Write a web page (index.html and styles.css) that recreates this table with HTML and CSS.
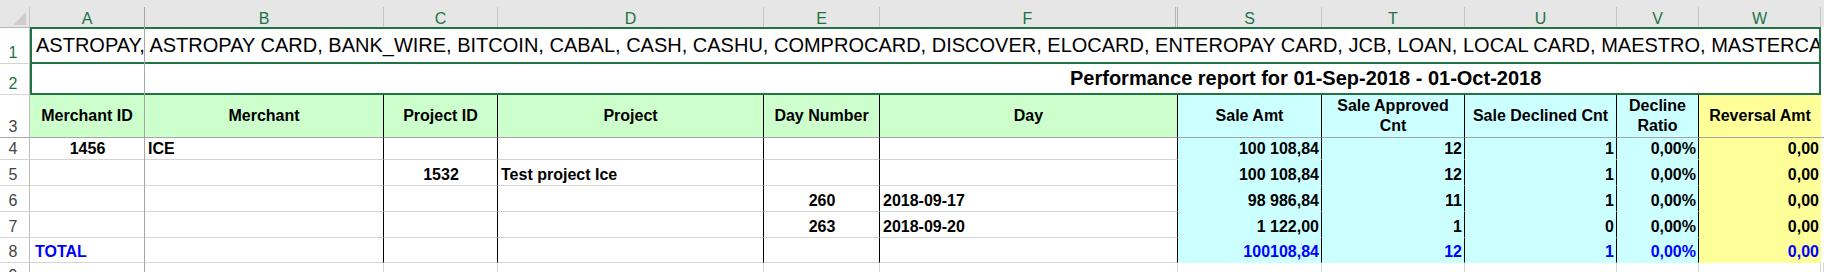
FILE: index.html
```html
<!DOCTYPE html>
<html lang="en">
<head>
<meta charset="utf-8">
<title>Performance report</title>
<link rel="stylesheet" href="styles.css">
</head>
<body>
<div class="sheet">
  <div class="topband"></div>
  <div class="row colhdr">
    <div class="corner"><svg width="30" height="20" viewBox="0 0 30 20"><polygon points="13,18 26,18 26,5" fill="#cdcdcd"/></svg></div>
    <div class="ch">A</div>
    <div class="ch">B</div>
    <div class="ch">C</div>
    <div class="ch">D</div>
    <div class="ch">E</div>
    <div class="ch hid">F</div>
    <div class="ch">S</div>
    <div class="ch">T</div>
    <div class="ch">U</div>
    <div class="ch">V</div>
    <div class="ch">W</div>
    <div class="ch last"></div>
  </div>

  <div class="row r1">
    <div class="rn first sel">1</div>
    <div class="banner">ASTROPAY, ASTROPAY CARD, BANK_WIRE, BITCOIN, CABAL, CASH, CASHU, COMPROCARD, DISCOVER, ELOCARD, ENTEROPAY CARD, JCB, LOAN, LOCAL CARD, MAESTRO, MASTERCARD</div>
    <div class="pad"></div>
  </div>

  <div class="row r2">
    <div class="rn sel">2</div>
    <div class="title">Performance report for 01-Sep-2018 - 01-Oct-2018</div>
    <div class="pad"></div>
  </div>

  <div class="row r3">
    <div class="rn frz">3</div>
    <div class="th g fz">Merchant ID</div>
    <div class="th g">Merchant</div>
    <div class="th g">Project ID</div>
    <div class="th g">Project</div>
    <div class="th g">Day Number</div>
    <div class="th g">Day</div>
    <div class="th c">Sale Amt</div>
    <div class="th c">Sale Approved<br>Cnt</div>
    <div class="th c">Sale Declined Cnt</div>
    <div class="th c">Decline<br>Ratio</div>
    <div class="th y nb">Reversal Amt</div>
    <div class="th w"></div>
  </div>

  <div class="row r4">
    <div class="rn">4</div>
    <div class="td fz ctr">1456</div>
    <div class="td">ICE</div>
    <div class="td"></div>
    <div class="td"></div>
    <div class="td"></div>
    <div class="td"></div>
    <div class="td c num">100 108,84</div>
    <div class="td c num">12</div>
    <div class="td c num">1</div>
    <div class="td c num">0,00%</div>
    <div class="td y num nb">0,00</div>
    <div class="td w"></div>
  </div>

  <div class="row r5">
    <div class="rn">5</div>
    <div class="td fz"></div>
    <div class="td"></div>
    <div class="td ctr">1532</div>
    <div class="td">Test project Ice</div>
    <div class="td"></div>
    <div class="td"></div>
    <div class="td c num">100 108,84</div>
    <div class="td c num">12</div>
    <div class="td c num">1</div>
    <div class="td c num">0,00%</div>
    <div class="td y num nb">0,00</div>
    <div class="td w"></div>
  </div>

  <div class="row r6">
    <div class="rn">6</div>
    <div class="td fz"></div>
    <div class="td"></div>
    <div class="td"></div>
    <div class="td"></div>
    <div class="td ctr">260</div>
    <div class="td">2018-09-17</div>
    <div class="td c num">98 986,84</div>
    <div class="td c num">11</div>
    <div class="td c num">1</div>
    <div class="td c num">0,00%</div>
    <div class="td y num nb">0,00</div>
    <div class="td w"></div>
  </div>

  <div class="row r7">
    <div class="rn">7</div>
    <div class="td fz"></div>
    <div class="td"></div>
    <div class="td"></div>
    <div class="td"></div>
    <div class="td ctr">263</div>
    <div class="td">2018-09-20</div>
    <div class="td c num">1 122,00</div>
    <div class="td c num">1</div>
    <div class="td c num">0</div>
    <div class="td c num">0,00%</div>
    <div class="td y num nb">0,00</div>
    <div class="td w"></div>
  </div>

  <div class="row r8 total">
    <div class="rn">8</div>
    <div class="td fz indent">TOTAL</div>
    <div class="td"></div>
    <div class="td"></div>
    <div class="td"></div>
    <div class="td"></div>
    <div class="td"></div>
    <div class="td c num">100108,84</div>
    <div class="td c num">12</div>
    <div class="td c num">1</div>
    <div class="td c num">0,00%</div>
    <div class="td y num nb">0,00</div>
    <div class="td w"></div>
  </div>

  <div class="row r9">
    <div class="rn">9</div>
    <div class="ec"></div>
    <div class="ec"></div>
    <div class="ec"></div>
    <div class="ec"></div>
    <div class="ec"></div>
    <div class="ec"></div>
    <div class="ec"></div>
    <div class="ec"></div>
    <div class="ec"></div>
    <div class="ec"></div>
    <div class="ec"></div>
    <div class="ec"></div>
  </div>

  <div class="freeze-v"></div>
</div>
</body>
</html>
```

FILE: styles.css
```css
* {
  box-sizing: border-box;
  margin: 0;
  padding: 0;
}

html, body {
  width: 1824px;
  height: 272px;
  overflow: hidden;
  background: #ffffff;
}

body {
  font-family: "Liberation Sans", Arial, sans-serif;
  color: #000000;
}

.sheet {
  position: relative;
  width: 1824px;
  height: 272px;
  overflow: hidden;
}

.topband {
  height: 7px;
  background: #e6e6e6;
}

.row {
  display: grid;
  grid-template-columns: 30px 115px 239px 114px 266px 116px 298px 144px 143px 152px 82px 122px 3px;
}

/* column header */
.colhdr {
  height: 20px;
  background: #e6e6e6;
}

.corner {
  border-right: 1px solid #c6c6c6;
  height: 20px;
}

.corner svg {
  display: block;
}

.ch {
  height: 20px;
  border-right: 1px solid #c6c6c6;
  color: #217346;
  font-size: 16px;
  line-height: 20px;
  padding-top: 2px;
  text-align: center;
  overflow: hidden;
}

.ch.hid {
  border-right: 3px double #b4b4b4;
}

.ch.last {
  border-right: none;
}

/* row numbers */
.rn {
  display: flex;
  align-items: flex-end;
  justify-content: center;
  padding-right: 3px;
  padding-bottom: 1px;
  border-right: 1px solid #bdbdbd;
  border-bottom: 1px solid #d4d4d4;
  font-size: 16px;
  line-height: 18px;
  color: #444444;
  background: #ffffff;
}

.rn.first {
  border-top: 1px solid #b4b4b4;
}

.rn.sel {
  color: #217346;
}

.rn.frz {
  border-bottom-color: #a6a6a6;
}

/* rows 1 and 2 */
.r1 {
  height: 37px;
}

.banner {
  grid-column: 2 / 13;
  border: 2px solid #217346;
  padding-left: 4px;
  font-size: 20px;
  line-height: 33px;
  white-space: nowrap;
  overflow: hidden;
}

.r2 {
  height: 31px;
}

.title {
  grid-column: 2 / 13;
  border: 2px solid #217346;
  border-top: none;
  padding-left: 1038px;
  font-size: 20px;
  font-weight: bold;
  line-height: 29px;
  white-space: nowrap;
  overflow: hidden;
}

.pad {
  background: #ffffff;
}

/* header row 3 */
.r3 {
  height: 43px;
}

.th {
  display: flex;
  align-items: center;
  justify-content: center;
  text-align: center;
  font-size: 16px;
  font-weight: bold;
  line-height: 20px;
  border-right: 1px solid #000000;
  border-bottom: 1px solid #a6a6a6;
  white-space: nowrap;
}

.th.g { background: #ccffcc; }
.th.c { background: #ccffff; }
.th.y { background: #ffff99; }
.th.w { background: #ffffff; border-right: none; }
.th.fz { border-right-color: #a6a6a6; }
.nb { border-right: none !important; }

/* data rows */
.r4 { height: 22px; }
.r5, .r6, .r7 { height: 26px; }
.r8 { height: 25px; }
.r9 { height: 24px; }

.td {
  display: flex;
  align-items: flex-end;
  justify-content: flex-start;
  padding: 0 2px 1px 3px;
  font-size: 16px;
  font-weight: bold;
  line-height: 18px;
  white-space: nowrap;
  border-right: 1px solid #000000;
  border-bottom: 1px solid #d4d4d4;
}

.td.fz {
  border-right-color: #a6a6a6;
}

.td.ctr {
  justify-content: center;
}

.td.num {
  justify-content: flex-end;
}

.td.c {
  background: #ccffff;
  border-bottom-color: transparent;
}

.td.y {
  background: #ffff99;
  border-bottom-color: transparent;
}

.td.w {
  border-right: none;
  border-bottom-color: transparent;
}

.td.indent {
  padding-left: 5px;
}

.total .td {
  color: #0000ff;
}

.ec {
  border-right: 1px solid #d4d4d4;
}

/* frozen pane divider */
.freeze-v {
  position: absolute;
  left: 144px;
  top: 7px;
  width: 1px;
  height: 265px;
  background: #a6a6a6;
}
```
